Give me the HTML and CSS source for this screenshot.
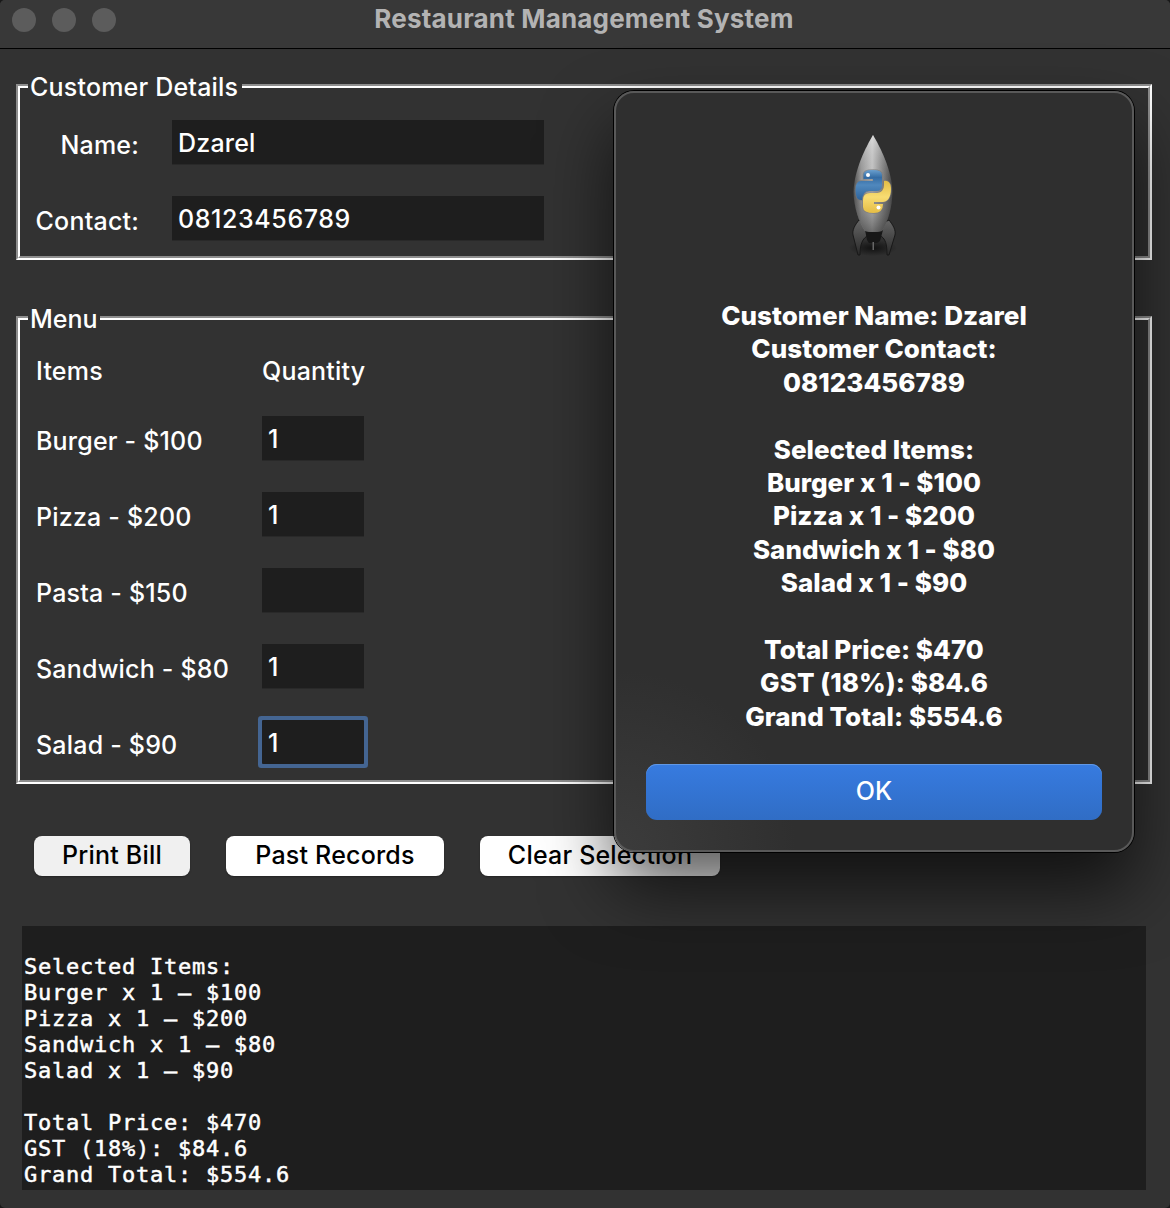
FILE: index.html
```html
<!DOCTYPE html>
<html lang="en">
<head>
<meta charset="utf-8">
<title>Restaurant Management System</title>
<link rel="stylesheet" href="styles.css">
</head>
<body>
<div class="window">
  <header class="titlebar">
    <div class="lights"><i></i><i></i><i></i></div>
    <h1>Restaurant Management System</h1>
  </header>
  <main class="content">
    <section class="group customer">
      <div class="group-inner">
        <h2 class="legend">Customer Details</h2>
        <div class="form">
          <label>Name:</label><div class="entry">Dzarel</div>
          <label>Contact:</label><div class="entry number">08123456789</div>
        </div>
      </div>
    </section>
    <section class="group menu">
      <div class="group-inner">
        <h2 class="legend short">Menu</h2>
        <div class="items">
          <div class="head">Items</div><div class="head">Quantity</div>
          <label>Burger - $100</label><div class="entry">1</div>
          <label>Pizza - $200</label><div class="entry">1</div>
          <label>Pasta - $150</label><div class="entry"></div>
          <label>Sandwich - $80</label><div class="entry">1</div>
          <label>Salad - $90</label><div class="entry focused">1</div>
        </div>
      </div>
    </section>
    <div class="actions">
      <button class="btn print">Print Bill</button>
      <button class="btn past">Past Records</button>
      <button class="btn clear">Clear Selection</button>
    </div>
    <pre class="bill">

Selected Items:
Burger x 1 – $100
Pizza x 1 – $200
Sandwich x 1 – $80
Salad x 1 – $90

Total Price: $470
GST (18%): $84.6
Grand Total: $554.6</pre>
  </main>
  <div class="dialog">
    <svg class="rocket" width="60" height="130" viewBox="0 0 60 130">
      <defs>
        <linearGradient id="body" x1="0" x2="1">
          <stop offset="0" stop-color="#4c4c4c"/><stop offset=".2" stop-color="#999"/>
          <stop offset=".48" stop-color="#c8c8c8"/><stop offset=".72" stop-color="#8b8b8b"/>
          <stop offset="1" stop-color="#424242"/>
        </linearGradient>
        <linearGradient id="shade" x1="0" y1="0" x2="0" y2="1">
          <stop offset="0" stop-color="#fff" stop-opacity=".4"/><stop offset=".5" stop-color="#777" stop-opacity="0"/>
          <stop offset="1" stop-color="#222" stop-opacity=".55"/>
        </linearGradient>
        <linearGradient id="fin" x1="0" y1="0" x2="0" y2="1">
          <stop offset="0" stop-color="#666"/><stop offset="1" stop-color="#292929"/>
        </linearGradient>
        <linearGradient id="blue" x1="0" y1="0" x2="0" y2="1">
          <stop offset="0" stop-color="#6a9fce"/><stop offset=".25" stop-color="#346ca4"/><stop offset=".5" stop-color="#5088bd"/><stop offset="1" stop-color="#2d639b"/>
        </linearGradient>
        <linearGradient id="gold" x1="0" y1="0" x2="0" y2="1">
          <stop offset="0" stop-color="#e2bd45"/><stop offset=".5" stop-color="#f8dc72"/><stop offset="1" stop-color="#e5bd45"/>
        </linearGradient>
        <radialGradient id="ground"><stop offset="0" stop-color="#111"/><stop offset="1" stop-color="#111" stop-opacity="0"/></radialGradient>
      </defs>
      <ellipse cx="30" cy="116" rx="24" ry="8" fill="url(#ground)"/>
      <path d="M16 88 C12 93 9 98 10 103 L15 123 L17 123 C17 113 19 106 26 103 L26 93Z" fill="url(#fin)" stroke="#181818"/>
      <path d="M46 88 C50 93 53 98 52 103 L46 123 L44 123 C44 113 43 106 36 103 L36 93Z" fill="url(#fin)" stroke="#181818"/>
      <path d="M22 98 H40 L37 109 L34 111 H26 L24 108Z" fill="#171717"/>
      <path d="M29.500 110h1.500v8h-1.500z" fill="#666"/>
      <path d="M30 3 C23 15 11 38 10.500 60 C11 76 16 90 22 99 Q30 101 39 99 C45 89 49 76 49.500 60 C49 38 37 15 30 3Z" fill="url(#body)"/>
      <path d="M30 3 C23 15 11 38 10.500 60 C11 76 16 90 22 99 Q30 101 39 99 C45 89 49 76 49.500 60 C49 38 37 15 30 3Z" fill="url(#shade)"/>
      <g stroke="#777" stroke-opacity=".65" stroke-width="1.500" paint-order="stroke">
        <path d="M20.500 44 C20 39 24 38 30 38 Q39 38 39 43 V53 Q39 59 33 59 H26 Q20 59 19 68 Q12.500 69 12.500 58 Q12.500 49 18 49 H30 V47 H20.500Z" fill="url(#blue)"/>
        <path d="M41 49 C46 48 48 52 48 57 C48 66 44 70 40 70 H31 V72 H40 Q40 81 31 81 Q20 81 20 75 V68 Q20 61 27 61 H34 Q41 60 41 53Z" fill="url(#gold)"/>
      </g>
      <circle cx="25" cy="43" r="2" fill="#fff"/><circle cx="35.500" cy="75.500" r="2" fill="#fff"/>
    </svg>
    <div class="message">
      <p>Customer Name: Dzarel</p><p>Customer Contact:</p><p>08123456789</p><p></p>
      <p>Selected Items:</p><p>Burger x 1 - $100</p><p>Pizza x 1 - $200</p><p>Sandwich x 1 - $80</p><p>Salad x 1 - $90</p><p></p>
      <p>Total Price: $470</p><p>GST (18%): $84.6</p><p>Grand Total: $554.6</p>
    </div>
    <button class="ok">OK</button>
  </div>
</div>
</body>
</html>
```
FILE: styles.css
```css
* { box-sizing: border-box; }
body { margin: 0; background: #191919; }
.window {
  position: relative;
  width: 1170px;
  height: 1208px;
  overflow: hidden;
  border-radius: 5px;
  background: #323232;
  color: #fff;
  font: 450 25px/32px Inter, "Liberation Sans", sans-serif;
  letter-spacing: .2px;
}
h1, h2, p, pre { margin: 0; font-weight: inherit; font-size: inherit; }
.titlebar {
  display: grid;
  grid-template-columns: 116px 1fr 118px;
  height: 49px;
  background: #383838;
  border-bottom: 1px solid #000;
}
.lights { display: flex; gap: 16px; padding: 8px 0 0 12px; }
.lights i { width: 24px; height: 24px; border-radius: 50%; background: #5c5c5c; }
h1 { padding-top: 3px; text-align: center; color: #b3b3b3; font-size: 26px; font-weight: 700; letter-spacing: .18px; }
.content { display: flex; flex-direction: column; padding: 35px 18px 0 16px; }
.group { border: 2px solid; border-color: #8e8e8e #fff #fff #8e8e8e; }
.group-inner { height: 100%; border: 2px solid; border-color: #fff #8e8e8e #8e8e8e #fff; }
.customer { height: 176px; }
.menu { height: 468px; margin-top: 56px; }
.legend { width: 214px; height: 32px; margin: -17px 0 0 8px; padding: 0 0 0 2px; background: #323232; white-space: nowrap; }
.short { width: 72px; letter-spacing: 0; }
.form { display: grid; grid-template-columns: 119px 372px; column-gap: 33px; row-gap: 31px; padding-top: 17px; }
.form label { text-align: right; padding: 9px 0 0; height: 45px; }
.entry { height: 45px; padding: 7px 6px; background: #1e1e1e; border-bottom: 1px solid #292929; }
.number { letter-spacing: .6px; }
.items { display: grid; grid-template-columns: 226px 102px; row-gap: 31px; padding: 20px 0 0 16px; }
.items .head { height: 30px; }
.items label { padding-top: 9px; height: 45px; }
.focused { border: 0; height: 44px; box-shadow: 0 0 0 4px #446592; border-radius: 1px; }
.actions { display: flex; gap: 36px; padding: 52px 0 0 18px; }
.btn {
  height: 40px; padding: 0 0 3px; border: 0; border-radius: 8px;
  background: #fff; color: #000; font: inherit; letter-spacing: .2px;
  box-shadow: 0 1px 2px rgb(0 0 0 / 30%);
}
.print { width: 156px; background: #f0f0f0; }
.past { width: 218px; }
.clear { width: 240px; }
.bill {
  width: 1124px; height: 264px; margin: 50px 0 0 6px; padding: 2px;
  background: #1e1e1e;
  font: 22px/26px "DejaVu Sans Mono", monospace;
  letter-spacing: .755px;
  -webkit-text-stroke: .5px #fff;
}
.dialog {
  position: absolute; left: 614px; top: 91px; width: 520px; height: 761px;
  display: flex; flex-direction: column; align-items: center;
  border: 2px solid #595959; border-radius: 20px;
  background: radial-gradient(circle at 0 100%, #3c3c3c, #2f2f2f 180px);
  box-shadow: 0 0 0 1px #000, 0 36px 70px rgb(0 0 0 / 65%);
}
.rocket { margin: 39px 2px 0 0; flex: none; }
.message { padding-top: 37px; text-align: center; font-size: 26px; font-weight: 800; letter-spacing: .03px; }
.message p { height: 33.42px; line-height: 33.42px; }
.ok {
  width: 456px; height: 56px; margin-top: 31px; padding: 0 0 2px;
  border: 0; border-radius: 11px; color: #fff; font: inherit;
  background: linear-gradient(#377be0, #306dc5);
  box-shadow: inset 0 1px #6198e5;
}
```
